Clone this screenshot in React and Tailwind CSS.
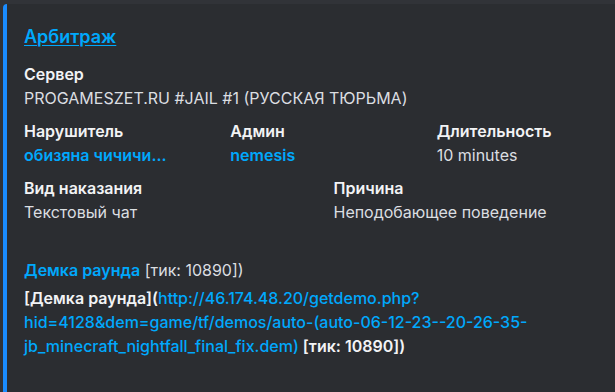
export default function App() {
  const font = { fontFamily: 'Inter, "Noto Sans", sans-serif' };
  return (
    <div className="w-[615px] h-[392px] overflow-hidden bg-[#313338] pt-[4px] pl-[3px]" style={font}>
      <div className="w-[660px] h-[420px] bg-[#2b2d31] border-l-4 border-[#1a8cff] rounded-l-[4px] pl-[17px] pt-[22px]">
        <a className="block text-[18px] leading-[22px] font-semibold text-[#00a8fc] underline underline-offset-2">Арбитраж</a>
        <div className="mt-[16px] grid grid-cols-12 gap-x-[8px] gap-y-[13px] w-[611px] text-[16px] leading-[20px]">
          <div className="col-span-12">
            <div className="font-semibold text-[#f2f3f5] mb-[4px]">Сервер</div>
            <div className="text-[#dbdee1]">PROGAMESZET.RU #JAIL #1 (РУССКАЯ ТЮРЬМА)</div>
          </div>
          <div className="col-span-4">
            <div className="font-semibold text-[#f2f3f5] mb-[4px]">Нарушитель</div>
            <div className="font-semibold text-[#00a8fc]">обизяна чичичи...</div>
          </div>
          <div className="col-span-4">
            <div className="font-semibold text-[#f2f3f5] mb-[4px]">Админ</div>
            <div className="font-semibold text-[#00a8fc]">nemesis</div>
          </div>
          <div className="col-span-4">
            <div className="font-semibold text-[#f2f3f5] mb-[4px]">Длительность</div>
            <div className="text-[#dbdee1]">10 minutes</div>
          </div>
          <div className="col-span-6">
            <div className="font-semibold text-[#f2f3f5] mb-[4px]">Вид наказания</div>
            <div className="text-[#dbdee1]">Текстовый чат</div>
          </div>
          <div className="col-span-6">
            <div className="font-semibold text-[#f2f3f5] mb-[4px]">Причина</div>
            <div className="text-[#dbdee1]">Неподобающее поведение</div>
          </div>
        </div>
        <div className="mt-[38px] text-[16px] leading-[20px] text-[#dbdee1]">
          <span className="font-semibold text-[#00a8fc]">Демка раунда</span> [тик: 10890])
        </div>
        <div className="mt-[6px] w-[580px] text-[16px] leading-[24px] font-semibold text-[#f2f3f5]">
          [Демка раунда](<span className="text-[#00a8fc] font-medium">http://46.174.48.20/getdemo.php?<br />hid=4128&amp;dem=game/tf/demos/auto-(auto-06-12-23--20-26-35-<br />jb_minecraft_nightfall_final_fix.dem)</span> [тик: 10890])
        </div>
      </div>
    </div>
  );
}
